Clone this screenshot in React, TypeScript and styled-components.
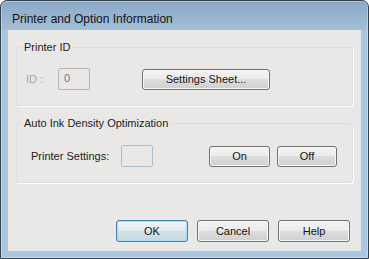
import styled, { createGlobalStyle } from "styled-components";

const GlobalStyle = createGlobalStyle`
  html, body {
    margin: 0;
    padding: 0;
    background: #ffffff;
  }
  body {
    font-family: "Liberation Sans", Arial, sans-serif;
    font-size: 11px;
    color: #1c1c1c;
  }
`;

const Window = styled.div`
  box-sizing: border-box;
  width: 369px;
  height: 259px;
  border: 1px solid #34414f;
  border-radius: 7px 7px 0 0;
  background: linear-gradient(to bottom, #8aa8c5 0px, #a3bed8 29px, #aac7e1 30px, #aac7e1 100%);
  box-shadow: inset 0 0 0 1px rgba(255, 255, 255, 0.35);
  display: flex;
  flex-direction: column;
  padding: 0 7px 7px 7px;
`;

const TitleBar = styled.div`
  height: 29px;
  flex-shrink: 0;
  display: flex;
  align-items: center;
  padding: 6px 0 0 4px;
  box-sizing: border-box;
  font-size: 12px;
  color: #141414;
`;

const Client = styled.div`
  flex: 1;
  background: #e9e8e6;
  display: flex;
  flex-direction: column;
  padding: 17px 8px 0 8px;
`;

const Group = styled.div<{ $height: number; $gap?: number }>`
  box-sizing: border-box;
  height: ${(p) => p.$height}px;
  margin-top: ${(p) => p.$gap ?? 0}px;
  border: 1px solid #d5dfe5;
  border-radius: 3px;
  box-shadow: 1px 1px 0 #ffffff;
  display: flex;
  flex-direction: column;
`;

const Legend = styled.div`
  align-self: flex-start;
  margin: -7px 0 0 5px;
  padding: 0 2px;
  height: 13px;
  line-height: 13px;
  background: #e9e8e6;
  color: #1c1c1c;
`;

const Row = styled.div<{ $top: number; $left: number }>`
  display: flex;
  align-items: center;
  margin-top: ${(p) => p.$top}px;
  padding-left: ${(p) => p.$left}px;
`;

const Label = styled.span<{ $width: number; $disabled?: boolean }>`
  width: ${(p) => p.$width}px;
  flex-shrink: 0;
  color: ${(p) => (p.$disabled ? "#a4a4a4" : "#1c1c1c")};
`;

const Field = styled.div<{ $disabled?: boolean }>`
  box-sizing: border-box;
  width: 32px;
  height: 22px;
  flex-shrink: 0;
  border: 1px solid ${(p) => (p.$disabled ? "#b4b4b4" : "#a9bed5")};
  border-radius: 2px;
  background: #e9e8e6;
  color: #77778c;
  padding: 3px 0 0 5px;
  line-height: 13px;
`;

const Button = styled.button<{ $width: number; $default?: boolean; $gap?: number }>`
  box-sizing: border-box;
  width: ${(p) => p.$width}px;
  height: ${(p) => (p.$default !== undefined ? 22 : 21)}px;
  margin-left: ${(p) => p.$gap ?? 0}px;
  flex-shrink: 0;
  padding: 0;
  font-family: "Liberation Sans", Arial, sans-serif;
  font-size: 11px;
  color: #141414;
  border: 1px solid ${(p) => (p.$default ? "#3c85b5" : "#707070")};
  border-radius: 3px;
  background: ${(p) =>
    p.$default
      ? "linear-gradient(to bottom, #eef3f6 0%, #e4ecf1 50%, #d3e0e7 50%, #c8d8e0 100%)"
      : "linear-gradient(to bottom, #f2f2f2 0%, #ebebeb 50%, #dddddd 50%, #cfcfcf 100%)"};
  box-shadow: inset 0 0 0 1px ${(p) => (p.$default ? "#a9dbf3" : "#f8f8f8")};
`;

const Footer = styled.div`
  display: flex;
  justify-content: flex-end;
  gap: 9px;
  margin-top: 37px;
  padding-right: 3px;
`;

export default function App() {
  return (
    <>
      <GlobalStyle />
      <Window>
        <TitleBar>Printer and Option Information</TitleBar>
        <Client>
          <Group $height={59}>
            <Legend>Printer ID</Legend>
            <Row $top={14} $left={9}>
              <Label $width={32} $disabled>
                ID :
              </Label>
              <Field $disabled>0</Field>
              <Button $width={128} $gap={52}>
                Settings Sheet...
              </Button>
            </Row>
          </Group>
          <Group $height={60} $gap={17}>
            <Legend>Auto Ink Density Optimization</Legend>
            <Row $top={15} $left={14}>
              <Label $width={90}>Printer Settings:</Label>
              <Field />
              <Button $width={61} $gap={56}>
                On
              </Button>
              <Button $width={60} $gap={7}>
                Off
              </Button>
            </Row>
          </Group>
          <Footer>
            <Button $width={72} $default>
              OK
            </Button>
            <Button $width={72} $default={false}>
              Cancel
            </Button>
            <Button $width={72} $default={false}>
              Help
            </Button>
          </Footer>
        </Client>
      </Window>
    </>
  );
}
